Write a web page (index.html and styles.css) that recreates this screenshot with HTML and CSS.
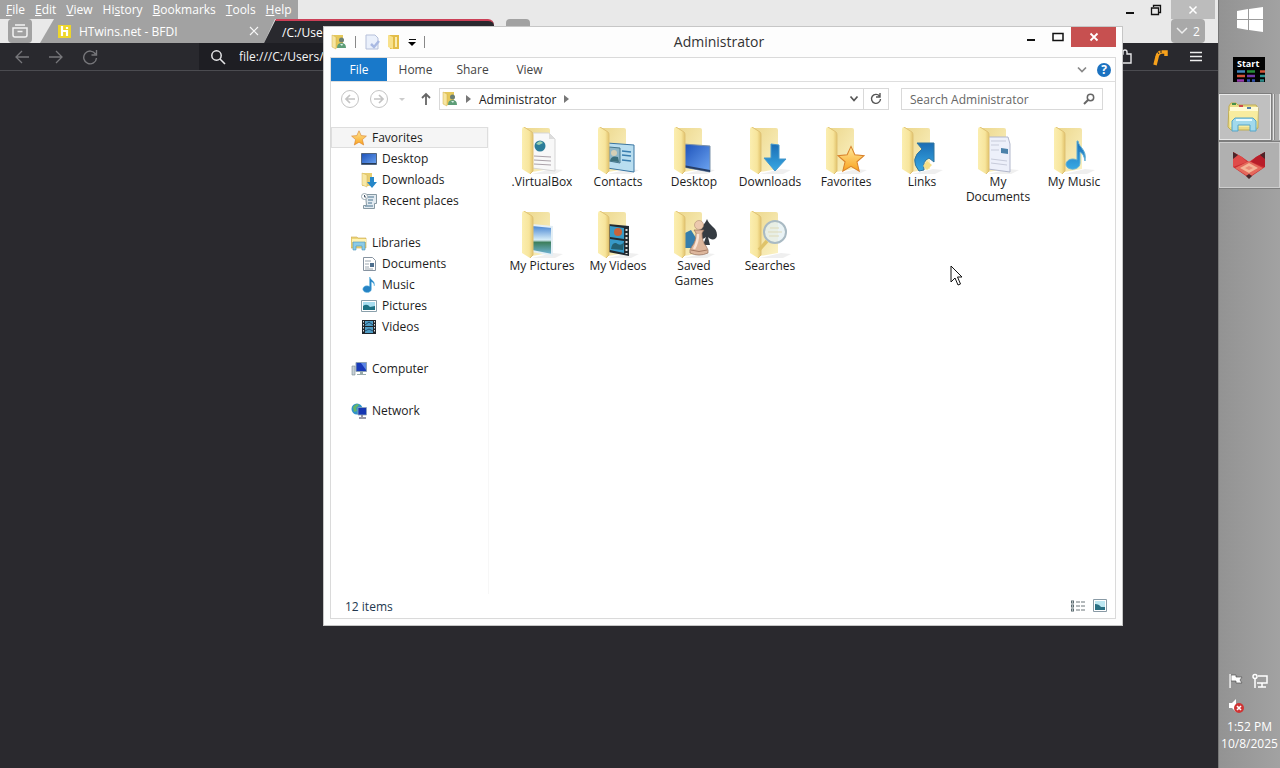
FILE: index.html
```html
<!DOCTYPE html>
<html lang="en">
<head>
<meta charset="utf-8">
<title>Administrator</title>
<link rel="stylesheet" href="styles.css">
</head>
<body>
<svg class="defs" aria-hidden="true">
  <defs>
    <linearGradient id="flap" x1="0" x2="1"><stop offset="0" stop-color="#fbeeb0"/><stop offset=".65" stop-color="#f7e59c"/><stop offset="1" stop-color="#e2c36c"/></linearGradient>
    <linearGradient id="back" x1="0" y1="0" x2="1" y2="1"><stop offset="0" stop-color="#ecd78c"/><stop offset="1" stop-color="#fbf2c4"/></linearGradient>
    <linearGradient id="blue" x1="0" y1="0" x2="0" y2="1"><stop offset="0" stop-color="#1b6db4"/><stop offset="1" stop-color="#37a9e4"/></linearGradient>
    <linearGradient id="screen" x1="0" y1="0" x2="1" y2="1"><stop offset="0" stop-color="#1c50b8"/><stop offset="1" stop-color="#6da5f2"/></linearGradient>
    <linearGradient id="gold" x1="0" y1="0" x2="0" y2="1"><stop offset="0" stop-color="#ffe99a"/><stop offset="1" stop-color="#f9a21e"/></linearGradient>
    <linearGradient id="sky" x1="0" y1="0" x2="0" y2="1"><stop offset="0" stop-color="#3f7fd0"/><stop offset=".5" stop-color="#d8eef8"/><stop offset=".58" stop-color="#3d7f5d"/><stop offset="1" stop-color="#73b7df"/></linearGradient>
    <symbol id="f-back" viewBox="0 0 48 48"><path d="M35 42l10 1-8 4H14z" fill="#efefef"/><path d="M6 1h24q2 0 2 2v39l-18 3z" fill="url(#back)"/></symbol>
    <symbol id="f-front" viewBox="0 0 48 48"><path d="M4 3q0-3 2-3l8 5q1 1 1 3v36l-3 3-8-5z" fill="url(#flap)"/><path d="M6 0l8 5q1 1 1 3v36l-3 3" fill="none" stroke="#dfc274"/></symbol>
    <symbol id="star" viewBox="0 0 16 16"><path d="M8 .8l2.200 4.800 5.200.5-4 3.500 1.300 5.400L8 12.200 3.300 15l1.300-5.400-4-3.500 5.200-.5z" fill="url(#gold)" stroke="#d9822b" stroke-width=".6"/></symbol>
    <symbol id="note" viewBox="0 0 16 16"><path d="M9 0c.6 3.400 5.500 3.600 4.300 9-.3-3-1.600-3.800-2.900-4.100V12A4.300 3.400 0 1 1 8.500 9.300V0z" fill="#2583c4" stroke="#7dc4e8" stroke-width=".5"/></symbol>
    <symbol id="user-folder" viewBox="0 0 16 16"><path d="M1 2l2-1h9v13H3z" fill="#e5c85a"/><path d="M1 1l4 2v12l-4-2z" fill="#f7e6a0" stroke="#d3ae4d" stroke-width=".5"/><circle cx="10.500" cy="6" r="2.500" fill="#6b7f73"/><path d="M6 14q0-5 4.500-5t4.500 5z" fill="#5d9d77"/><path d="M9 10l2 2 1-2z" fill="#d8efe8"/></symbol>
    <symbol id="library" viewBox="0 0 16 16"><path d="M0 2h6l1 1h8v10H0z" fill="#ecd57a" stroke="#cda94c" stroke-width=".6"/><path d="M1 4h14v3H1z" fill="#fff3b4"/><path d="M2 7h12v8h-3v-4H5v4H2z" fill="#8bcbe7" stroke="#4b93bb" stroke-width=".6"/></symbol>
    <symbol id="picture" viewBox="0 0 16 16"><path d="M.5 2.500h15v11H.5z" fill="#fff" stroke="#8aa0ab"/><path d="M2 4h12v8H2z" fill="#a8def0"/><path d="M2 8q4-3 7 1l5-1v4H2z" fill="#1c7183"/></symbol>
  </defs>
</svg>

<main class="browser">
  <header class="chrome">
    <nav class="menubar" aria-label="Browser menu">
      <button><u>F</u>ile</button><button><u>E</u>dit</button><button><u>V</u>iew</button><button>Hi<u>s</u>tory</button><button><u>B</u>ookmarks</button><button><u>T</u>ools</button><button><u>H</u>elp</button>
    </nav>
    <div class="caption">
      <button aria-label="Minimize"><svg width="12" height="12"><path d="M2 9h8" stroke="#111" stroke-width="2"/></svg></button>
      <button aria-label="Restore"><svg width="12" height="12" fill="none" stroke="#111"><path d="M1.500 4h7v6.500h-7zM3.500 3V1.500h7v7H9" stroke-width="1.300"/></svg></button>
      <button class="caption-close" aria-label="Close"><svg width="10" height="10"><path d="M1.500 1.500l7 7m0-7l-7 7" stroke="#fff" stroke-width="1.500"/></svg></button>
    </div>
  </header>
  <div class="tabs">
    <button class="recent" aria-label="Recent browsing"><svg width="18" height="18" fill="none" stroke="#f3f3f3" stroke-width="1.500"><path d="M4 3h10M2 6h14v7q0 2-2 2H4q-2 0-2-2zM6.500 9.500h5"/></svg></button>
    <div class="tab">
      <svg width="13" height="13"><path d="M0 0h13v13H0z" fill="#eed62b"/><path d="M4 1v10M4 6h5v5M9 2v2" stroke="#fff" stroke-width="2.200" fill="none"/></svg>
      <span class="tab-name">HTwins.net - BFDI</span>
      <button aria-label="Close tab"><svg width="10" height="10"><path d="M1 1l8 8m0-8L1 9" stroke="#f6f6f6" stroke-width="1.200"/></svg></button>
    </div>
    <div class="tab tab-active">/C:/Users/Administrator/</div>
    <button class="new-tab" aria-label="New tab"></button>
    <button class="all-tabs" aria-label="List all tabs"><svg width="12" height="8"><path d="M1 1l5 5 5-5" fill="none" stroke="#eee" stroke-width="1.500"/></svg>2</button>
  </div>
  <div class="toolbar">
    <button aria-label="Back"><svg width="16" height="16"><path d="M15 8H2m6-6L2 8l6 6" fill="none" stroke="#77777b" stroke-width="1.300"/></svg></button>
    <button aria-label="Forward"><svg width="16" height="16"><path d="M1 8h13M8 2l6 6-6 6" fill="none" stroke="#77777b" stroke-width="1.300"/></svg></button>
    <button aria-label="Reload"><svg width="16" height="16"><path d="M13.500 5A6.400 6.400 0 1 0 14.500 9M14.500 1v5h-5" fill="none" stroke="#77777b" stroke-width="1.400"/></svg></button>
    <label class="urlbar"><svg width="16" height="16"><circle cx="6.500" cy="6.500" r="4.700" fill="none" stroke="#e6e6e8" stroke-width="1.500"/><path d="M10 10l5 5" stroke="#e6e6e8" stroke-width="1.600"/></svg><input aria-label="Address" value="file:///C:/Users/Administrator/"></label>
    <button class="ext" aria-label="Extensions"><svg width="16" height="16"><path d="M1 5h4V3q0-2 2-2t2 2v2h4v9H1z" fill="none" stroke="#e6e6e8" stroke-width="1.400"/></svg></button>
    <button aria-label="Ruffle"><svg width="16" height="18"><path d="M3 17l2-8Q6 4 10 4h4v4" fill="none" stroke="#f7a11b" stroke-width="3.500"/><path d="M5 3l2 3M9 2v3" stroke="#29292e" stroke-width="1"/></svg></button>
    <button class="app-menu" aria-label="Menu"><svg width="12" height="12"><path d="M0 1.500h12M0 5.500h12M0 9.500h12" stroke="#eee" stroke-width="1.300"/></svg></button>
  </div>
</main>

<aside class="taskbar">
  <button class="start" aria-label="Start menu"><svg width="28" height="26" fill="#fff"><path d="M1 4l11-2v10H1zM13 2l14-2v12H13zM1 13h11v10L1 21zM13 13h14v12l-14-2z"/></svg></button>
  <button class="start-tile" aria-label="Start screen"><b>Start</b><svg width="32" height="12"><path d="M4 1.500h8" stroke="#4086bd" stroke-width="2.500"/><path d="M14 1.500h8" stroke="#268c3a" stroke-width="2.500"/><path d="M27 1.500h5M4 6h8" stroke="#d25338" stroke-width="2.500"/><path d="M14 6h8" stroke="#7438aa" stroke-width="2.500"/><path d="M27 6h5" stroke="#2e9392" stroke-width="2.500"/><path d="M4 10.500h7" stroke="#9a3cae" stroke-width="2.500"/><path d="M14 10.500h3m2 0h3" stroke="#3151b1" stroke-width="2.500"/><path d="M27 10.500h4" stroke="#2c8c8a" stroke-width="2.500"/></svg></button>
  <div class="stack"><button class="task" aria-label="File Explorer"><svg width="34" height="34" viewBox="0 0 34 34"><path d="M2 6l2-3h5l2 2h18l2 3v20l-3 2H4l-3-3z" fill="#eadb86" stroke="#c0ad55"/><path d="M3 7h28v5H3z" fill="#fffbd4"/><path d="M5 4h4" stroke="#459047" stroke-width="2"/><path d="M12 6h4" stroke="#cf4949" stroke-width="2"/><path d="M20 8h4" stroke="#5681ae" stroke-width="2"/><path d="M2 11h29l-1 16H3z" fill="#f8ec9f"/><path d="M5 31V21l3-3h18l3 3v10h-6v-6H11v6z" fill="#a1d9ec" stroke="#56a5c8"/><path d="M9 20h16" stroke="#e6faff" stroke-width="2"/></svg></button></div>
  <button class="task task-last" aria-label="Fox"><svg width="34" height="28" viewBox="0 0 34 28"><path d="M1 1l9 5 7 5 7-5 9-5v15l-16 11L1 16z" fill="#ca2d32"/><path d="M1 1l9 5 5 5-14 5z" fill="#df4b49"/><path d="M33 1l-9 5-5 5 14 5z" fill="#b81e2a"/><path d="M3 17l14-7 14 7-14 9z" fill="#e4695c"/><path d="M8 17l9-5 9 5-9 5z" fill="#f4b597"/><path d="M13 17l4-2 4 2-4 2z" fill="#e98a75"/><path d="M1 1l5 3-5 4zM33 1l-5 3 5 4zM14 25l3 3 3-3-3-2z" fill="#4b2529"/></svg></button>
  <div class="tray">
    <div class="tray-icons">
      <svg width="16" height="16"><path d="M1.500 1v14M3 2h5v2h6l-2 3 2 3H8V8H3z" fill="#fff" stroke="#555" stroke-width=".7"/><path d="M2 1v14" stroke="#fff" stroke-width="1.400"/></svg>
      <svg width="16" height="16" fill="none" stroke="#fff" stroke-width="1.500"><path d="M6 3h9v7H5M3 6v9M10 10v4M6 14h8"/><circle cx="3" cy="3.500" r="2"/></svg>
      <svg width="16" height="16"><path d="M1 5h3l4-4v13l-4-4H1z" fill="#fff"/><circle cx="11" cy="10" r="5" fill="#cf3434"/><path d="M9 8l4 4m0-4l-4 4" stroke="#fff" stroke-width="1.600"/></svg>
    </div>
    <time>1:52 PM</time><time>10/8/2025</time>
  </div>
</aside>

<section class="window" aria-label="Administrator">
  <header class="titlebar">
    <div class="quick">
      <svg width="16" height="16"><use href="#user-folder"/></svg><i></i>
      <button aria-label="Properties"><svg width="16" height="16"><path d="M2 1h9l3 3v11H2z" fill="#eaf0fb" stroke="#b5bfd9"/><path d="M7 10l3 3 5-6" fill="none" stroke="#a9b9e2" stroke-width="2.500"/></svg></button>
      <button aria-label="New folder"><svg width="16" height="16"><path d="M2 2l2-1h9v14H4z" fill="#e3bd48"/><path d="M2 1l5 2v12l-5-2z" fill="#f8e18b"/><path d="M10 3v10" stroke="#f9ecb4" stroke-width="2"/></svg></button>
      <button aria-label="Customize"><svg width="8" height="8"><path d="M1 1.500h7" stroke="#111"/><path d="M0 4h8L4 8z"/></svg></button><i></i>
    </div>
    <h1>Administrator</h1>
    <div class="win-buttons">
      <button aria-label="Minimize"><svg width="10" height="10"><path d="M1 8h8" stroke="#111" stroke-width="2"/></svg></button>
      <button aria-label="Maximize"><svg width="12" height="10"><path d="M1 1.500h10v7H1z" fill="none" stroke="#111" stroke-width="1.500"/></svg></button>
      <button class="win-close" aria-label="Close"><svg width="10" height="10"><path d="M1.500 1.500l7 7m0-7l-7 7" stroke="#fff" stroke-width="1.800"/></svg></button>
    </div>
  </header>
  <div class="frame">
    <nav class="ribbon" aria-label="Ribbon">
      <button class="file">File</button><button>Home</button><button>Share</button><button>View</button>
      <span class="ribbon-end"><button aria-label="Expand ribbon"><svg width="10" height="8"><path d="M1 1.500l4 4 4-4" fill="none" stroke="#888" stroke-width="1.700"/></svg></button><button class="help" aria-label="Help">?</button></span>
    </nav>
    <div class="address">
      <div class="arrows">
        <button aria-label="Back"><svg width="20" height="20" fill="none" stroke="#c4c4c4"><circle cx="10" cy="10" r="8.500"/><path d="M15 10H6m4-4l-4 4 4 4" stroke-width="1.700"/></svg></button>
        <button aria-label="Forward"><svg width="20" height="20" fill="none" stroke="#c4c4c4"><circle cx="10" cy="10" r="8.500"/><path d="M5 10h9m-4-4l4 4-4 4" stroke-width="1.700"/></svg></button>
        <button aria-label="Recent locations"><svg width="8" height="5"><path d="M1 1h6L4 4z" fill="#ccc"/></svg></button>
        <button aria-label="Up"><svg width="12" height="14"><path d="M6 13V2M2 6l4-4 4 4" fill="none" stroke="#666" stroke-width="1.800"/></svg></button>
      </div>
      <div class="path">
        <svg width="16" height="16"><use href="#user-folder"/></svg>
        <svg width="5" height="8"><path d="M0 0l5 4-5 4z" fill="#777"/></svg>
        <button>Administrator</button>
        <svg width="5" height="8"><path d="M0 0l5 4-5 4z" fill="#777"/></svg>
        <button class="drop" aria-label="Previous locations"><svg width="10" height="8"><path d="M1.500 1.500L5 5.500l3.500-4" fill="none" stroke="#555" stroke-width="1.700"/></svg></button>
        <button class="refresh" aria-label="Refresh"><svg width="12" height="12"><path d="M9.500 3A4.500 4.500 0 1 0 10.500 6M10 0v4H6" fill="none" stroke="#555" stroke-width="1.400"/></svg></button>
      </div>
      <label class="search"><input type="search" aria-label="Search Administrator" placeholder="Search Administrator"><svg width="12" height="12" fill="none" stroke="#666"><circle cx="7.500" cy="4.500" r="3.200" stroke-width="1.500"/><path d="M5 7l-4 4" stroke-width="2"/></svg></label>
    </div>
    <div class="content">
      <nav class="tree" aria-label="Locations">
        <ul>
          <li><a class="top selected" href="#"><svg width="16" height="16"><use href="#star"/></svg>Favorites</a></li>
          <li><a href="#"><svg width="16" height="16"><path d="M.5 2.500h15v11H.5z" fill="url(#screen)" stroke="#52657e"/><path d="M1 12.500h14" stroke="#243955"/></svg>Desktop</a></li>
          <li><a href="#"><svg width="16" height="16"><path d="M1 1h10v13H1z" fill="#e8ce72"/><path d="M1 1l5 2v12l-5-2z" fill="#f8e8a4" stroke="#d1b35a" stroke-width=".5"/><path d="M9 5h4v5h3l-5 6-5-6h3z" fill="#2687c8"/></svg>Downloads</a></li>
          <li><a href="#"><svg width="16" height="16"><path d="M4.500 1.500h11v9h-2v5h-11v-3h3z" fill="#e2eaf0" stroke="#8799a3"/><path d="M7 4h6M7 7h5M7 10h4M4 13h8" stroke="#7c9baf" stroke-width="1.500"/><circle cx="3.500" cy="3.500" r="3" fill="#fff" stroke="#9cabb2"/><path d="M3.500 2v2H5" fill="none" stroke="#456"/></svg>Recent places</a></li>
        </ul>
        <ul>
          <li><a class="top" href="#"><svg width="16" height="16"><use href="#library"/></svg>Libraries</a></li>
          <li><a href="#"><svg width="16" height="16"><path d="M2.500 1.500h9l3 3v10h-12z" fill="#fff" stroke="#8793a0"/><path d="M4 5h6M4 8h4M4 11h4M4 13h8" stroke="#9ca7b0"/><path d="M9 7h4v4H9z" fill="#4e6f8e"/></svg>Documents</a></li>
          <li><a href="#"><svg width="16" height="16"><use href="#note"/></svg>Music</a></li>
          <li><a href="#"><svg width="16" height="16"><use href="#picture"/></svg>Pictures</a></li>
          <li><a href="#"><svg width="16" height="16"><path d="M1 1h14v14H1z" fill="#20252b"/><path d="M4 2h8v5H4zM4 8h8v6H4z" fill="#509dc5"/><path d="M2.500 2v12m11-12v12" stroke="#ddd" stroke-dasharray="1.500"/><path d="M4 6l4-3 4 3M4 12l4-2 4 2" stroke="#244e6e" fill="none"/></svg>Videos</a></li>
        </ul>
        <ul><li><a class="top" href="#"><svg width="16" height="16"><path d="M5 1.500h10.500v9H5z" fill="#1839b8" stroke="#8da1b4"/><path d="M10 2h5v7z" fill="#5b85e4"/><path d="M9 11h3v2h3v1H6v-1h3z" fill="#9aa"/><path d="M1 5h3v9H1z" fill="#c7d0d6" stroke="#7b8992" stroke-width=".6"/></svg>Computer</a></li></ul>
        <ul><li><a class="top" href="#"><svg width="16" height="16"><circle cx="6" cy="6" r="5.500" fill="#3193ca"/><path d="M2 4q4-5 6-2L5 5l1 3-3 1z" fill="#65b569"/><path d="M7 4.500h8.500V12H7z" fill="#1636b2" stroke="#91a6ba" stroke-width=".8"/><path d="M11 12v2m-3 1h7" stroke="#778" stroke-width="1.500"/></svg>Network</a></li></ul>
      </nav>
      <div class="files">
        <a href="#"><svg width="48" height="48"><use href="#f-back"/><path d="M14 6h17l6 6v32l-23-3z" fill="#f8f8f8" stroke="#d5d5d5"/><path d="M31 6v6h6" fill="#ddd"/><circle cx="22" cy="19" r="5.500" fill="#2c7d99"/><path d="M18 17q4-5 7-1l-4 2z" fill="#9bd2b4"/><path d="M16 29l17 1M16 33l17 1M16 37l17 1" stroke="#aaa1a8"/><use href="#f-front"/></svg>.VirtualBox</a>
        <a href="#"><svg width="48" height="48"><use href="#f-back"/><path d="M13 16l27 2v27l-27-4z" fill="#b9def0" stroke="#3975a2"/><path d="M15 20l11 1v15l-11-2z" fill="#8fb7c8" stroke="#47788f"/><circle cx="20" cy="26" r="3" fill="#d5cfb6"/><path d="M16 34q1-6 8-4l1 5z" fill="#3b6f7c"/><path d="M28 24l9 1M28 28l9 1M28 33l9 1" stroke="#387dae" stroke-width="1.500"/><use href="#f-front"/></svg>Contacts</a>
        <a href="#"><svg width="48" height="48"><use href="#f-back"/><path d="M13 17l27 2v26l-27-5z" fill="url(#screen)" stroke="#7b91a9"/><path d="M13 38l27 5v2l-27-5z" fill="#263e67"/><use href="#f-front"/></svg>Desktop</a>
        <a href="#"><svg width="48" height="48"><use href="#f-back"/><use href="#f-front"/><path d="M25 17l8 1v14h7L29 44 18 31h7z" fill="url(#blue)" stroke="#4699cc"/></svg>Downloads</a>
        <a href="#"><svg width="48" height="48"><use href="#f-back"/><use href="#f-front"/><use href="#star" x="15" y="17" width="28" height="30"/></svg>Favorites</a>
        <a href="#"><svg width="48" height="48"><use href="#f-back"/><use href="#f-front"/><path d="M19 16h17v19l-5-4q-7 3-5 12l-5 1q-10-12 3-22z" fill="url(#blue)" stroke="#31749c"/><path d="M29 34l5 4-5 5-4-4z" fill="#f4df88"/></svg>Links</a>
        <a href="#"><svg width="48" height="48"><use href="#f-back"/><path d="M14 10h20l2 7v28l-22-3z" fill="#edf0fa" stroke="#b2b7cc"/><path d="M17 14h15M17 18h8M17 23h8M17 32l16 2M17 36l16 2" stroke="#c7cbda"/><path d="M27 21l7 1v5l-7-1z" fill="#4c82aa"/><use href="#f-front"/></svg>My Documents</a>
        <a href="#"><svg width="48" height="48"><use href="#f-back"/><use href="#f-front"/><path d="M28 14c1 7 9 8 7 20-1-6-3-8-5-9v11c0 8-14 8-14 1 1-5 7-6 11-4V14z" fill="url(#blue)" stroke="#60afd5"/></svg>My Music</a>
        <a href="#"><svg width="48" height="48"><use href="#f-back"/><path d="M14 14l20 2v28l-20-4z" fill="url(#sky)" stroke="#e4eff5" stroke-width="2"/><use href="#f-front"/></svg>My Pictures</a>
        <a href="#"><svg width="48" height="48"><use href="#f-back"/><path d="M14 13l21 2v30l-21-4z" fill="#222a31"/><path d="M16 15l14 2v11l-14-2zM16 28l14 2v12l-14-3z" fill="#3799c7"/><circle cx="24" cy="21" r="4" fill="#c8633b"/><path d="M17 38q1-7 5-6 5 4 8-1l-1 8z" fill="#236072"/><path d="M32.500 18v25" stroke="#ddd" stroke-width="2" stroke-dasharray="2"/><use href="#f-front"/></svg>My Videos</a>
        <a href="#"><svg width="48" height="48"><use href="#f-back"/><path d="M15 22l6-3 5 8-4 10h-7z" fill="#367eac"/><use href="#f-front"/><path d="M37 8c2 7 10 8 10 16 0 5-6 6-9 2l2 8h-7l3-8c-4 4-9 1-8-4 1-6 7-8 9-14z" fill="#353b42"/><path d="M24 19h10l-2 3q0 9 4 13l2 4v3q-9 4-18 0v-3l2-4q4-4 4-13z" fill="#ddb69c" stroke="#946f5a" stroke-width=".7"/><circle cx="29" cy="14" r="4.500" fill="#ecc9ae" stroke="#b28e76" stroke-width=".6"/><path d="M28 23q0 8-4 15" stroke="#f9e3d4" stroke-width="2.500" fill="none"/><path d="M21 39q8 3 16 0" stroke="#a67a63" fill="none"/></svg>Saved Games</a>
        <a href="#"><svg width="48" height="48"><use href="#f-back"/><use href="#f-front"/><circle cx="29" cy="21" r="11" fill="#e5f0f3" fill-opacity=".8" stroke="#a9bac3" stroke-width="2"/><path d="M24 17h9M22 21h14M23 25h10" stroke="#ddd9b9"/><path d="M21 30l-8 9" stroke="#dfc36a" stroke-width="3.500"/></svg>Searches</a>
      </div>
    </div>
    <footer class="status"><span>12 items</span><div>
      <button aria-label="Details view"><svg width="16" height="12"><path d="M1 2h3M1 6h3M1 10h3" stroke="#5b6b70" stroke-width="3"/><path d="M2 2h1M2 6h1M2 10h1" stroke="#fff"/><path d="M6 2h4m1 0h4M6 6h4m1 0h4M6 10h4m1 0h4" stroke="#6b7478"/></svg></button>
      <button aria-label="Large icons view"><svg width="16" height="16"><path d="M1.500 1.500h13v12h-13z" fill="#fff" stroke="#899aa5"/><path d="M3 3h10v9H3z" fill="#bce7f1"/><path d="M3 6q4 0 6 3h4v3H3z" fill="#286f82"/></svg></button></div></footer>
  </div>
</section>
<svg class="cursor" width="14" height="22" aria-hidden="true"><path d="M1 1v16l4-4 3 7 2.500-1-3-7H12z" fill="#fff" stroke="#111"/></svg>
</body>
</html>
```

FILE: styles.css
```css
* { box-sizing: border-box; }
body { margin: 0; display: flex; height: 100vh; overflow: hidden; position: relative; font: 12px/15px "Open Sans", "Noto Sans", sans-serif; color: #1c1c1c; background: #2a292e; }
button { border: 0; padding: 0; background: none; font: inherit; color: inherit; display: inline-flex; align-items: center; justify-content: center; }
input { border: 0; padding: 0; background: none; font: inherit; color: inherit; outline: 0; min-width: 0; flex: 1; }
svg { flex: none; display: block; }
a { color: inherit; text-decoration: none; }
ul { list-style: none; margin: 0; padding: 0; }
.defs { position: absolute; width: 0; height: 0; }

.browser { flex: 1; min-width: 0; }
.chrome { display: flex; justify-content: space-between; height: 19px; background: #e9e9e9; }
.menubar { display: flex; gap: 10px; padding: 0 6px; background: #a2a2a2; color: #fff; }
.caption { display: flex; padding-right: 3px; }
.caption button { width: 26px; }
.caption .caption-close { width: 44px; background: #bcbcbc; margin-left: 2px; }
.tabs { display: flex; height: 24px; background: #e9e9e9; color: #fff; }
.recent { width: 24px; margin-left: 8px; background: #a2a2a2; border-radius: 4px; }
.tab { display: flex; align-items: center; width: 235px; padding: 0 16px 0 18px; margin-left: 8px; gap: 8px; background: #a2a2a2; clip-path: polygon(14px 0, 100% 0, calc(100% - 11px) 100%, 0 100%); }
.tab-name { flex: 1; }
.tab-active { width: 230px; margin-left: -11px; padding: 0 0 0 18px; background: #29292e; border-top: 2px solid #cb4057; border-radius: 0 6px 0 0; clip-path: polygon(12px 0, 100% 0, 100% 100%, 0 100%); }
.new-tab { width: 24px; margin-left: 12px; background: #a2a2a2; border-radius: 4px; }
.all-tabs { width: 34px; margin-left: auto; margin-right: 13px; background: #a9a9a9; border-radius: 4px; gap: 5px; }
.toolbar { display: flex; align-items: center; height: 28px; padding: 0 16px 0 14px; gap: 18px; border-bottom: 1px solid #4b4b50; background: #29292e; }
.urlbar { flex: 1; align-self: stretch; display: flex; align-items: center; gap: 13px; padding-left: 11px; margin-left: 83px; color: #f4f4f4; background: #1e1e23; }
.app-menu { margin-left: 4px; }

.taskbar { width: 62px; display: flex; flex-direction: column; background: linear-gradient(90deg, #939393, #a2a2a2); border-left: 1px solid #777; }
.start { height: 40px; }
.start-tile { display: flex; flex-direction: column; align-items: flex-start; width: 32px; height: 25px; margin: 17px auto 12px 14px; background: #030303; color: #fff; overflow: hidden; }
.start-tile b { padding-left: 4px; font-size: 9px; line-height: 12px; }
.stack { display: flex; padding-right: 8px; border-right: 1px solid #ddd; background: linear-gradient(90deg, transparent 54px, #e5e5e5 54px, #e5e5e5 55px, #888 55px, #888 56px, #aaa 56px); }
.task { flex: 1; height: 46px; padding-right: 2px; background: #c0c0c0; border: 1px solid #eaeaea; outline: 1px solid #7e7e7e; }
.task-last { flex: none; margin-top: 2px; background: #b0b0b0; border-color: #cecece; }
.tray { margin-top: auto; padding-bottom: 16px; display: flex; flex-direction: column; align-items: center; color: #fff; white-space: nowrap; }
.tray-icons { display: flex; flex-wrap: wrap; gap: 9px 8px; width: 46px; padding: 0 0 4px 1px; }
.tray time { line-height: 17px; }

.window { position: absolute; left: 323px; top: 26px; width: 800px; height: 600px; display: flex; flex-direction: column; padding: 0 6px 6px; background: #fdfdfd; border: 1px solid #c6c6c6; }
.titlebar { display: grid; grid-template-columns: 1fr auto 1fr; height: 30px; align-items: center; }
.titlebar h1 { margin: 0; padding-right: 8px; font-size: 14px; line-height: 20px; font-weight: 400; color: #333; }
.quick { display: flex; align-items: center; gap: 6px; padding-left: 1px; }
.quick i { width: 1px; height: 12px; margin: 0 2px; background: #888; }
.win-buttons { display: flex; justify-content: flex-end; align-self: start; }
.win-buttons button { width: 27px; height: 20px; }
.win-buttons .win-close { width: 45px; background: #c75050; }
.frame { flex: 1; min-height: 0; display: flex; flex-direction: column; border: 1px solid #dadada; background: #fff; }
.ribbon { display: flex; height: 24px; border-bottom: 1px solid #dedede; color: #444; }
.ribbon > button { width: 57px; }
.ribbon .file { width: 56px; color: #fff; background: #1979ca; }
.ribbon-end { margin-left: auto; display: flex; align-items: center; gap: 10px; padding-right: 4px; }
.help { width: 14px; height: 14px; border-radius: 50%; background: #1c72c0; color: #fff; font-weight: 700; }
.address { display: flex; align-items: center; padding: 6px 12px 6px 9px; }
.arrows { display: flex; gap: 9px; width: 99px; }
.arrows button:last-child { margin-left: 5px; }
.path { flex: 1; display: flex; align-items: center; height: 22px; padding-left: 2px; gap: 8px; border: 1px solid #d9d9d9; }
.drop { margin-left: auto; }
.refresh { width: 25px; align-self: stretch; border-left: 1px solid #d9d9d9; margin-left: -4px; }
.search { display: flex; align-items: center; width: 202px; height: 22px; margin-left: 12px; padding: 0 7px 0 8px; border: 1px solid #d9d9d9; }
.search input::placeholder { color: #666; opacity: 1; }
.content { flex: 1; min-height: 0; display: flex; padding-top: 11px; }
.tree { width: 158px; border-right: 1px solid #f7f7f7; }
.tree ul { padding-bottom: 21px; }
.tree a { display: flex; align-items: center; gap: 5px; height: 21px; padding-left: 30px; }
.tree .top { padding-left: 20px; }
.tree .selected { padding-left: 19px; border: 1px solid #dedede; background: #f5f5f5; }
.files { flex: 1; display: grid; grid-template-columns: repeat(auto-fill, 76px); grid-auto-rows: 84px; padding-left: 15px; align-content: start; }
.files a { display: flex; flex-direction: column; align-items: center; text-align: center; padding: 0 4px; white-space: nowrap; }
.files svg { margin-bottom: -1px; }
.files a:nth-child(7), .files a:nth-child(11) { white-space: normal; }
.status { display: flex; align-items: center; justify-content: space-between; height: 24px; padding: 0 7px 0 14px; color: #22374f; }
.status div { display: flex; gap: 6px; }
.cursor { position: absolute; left: 950px; top: 265px; }
```
